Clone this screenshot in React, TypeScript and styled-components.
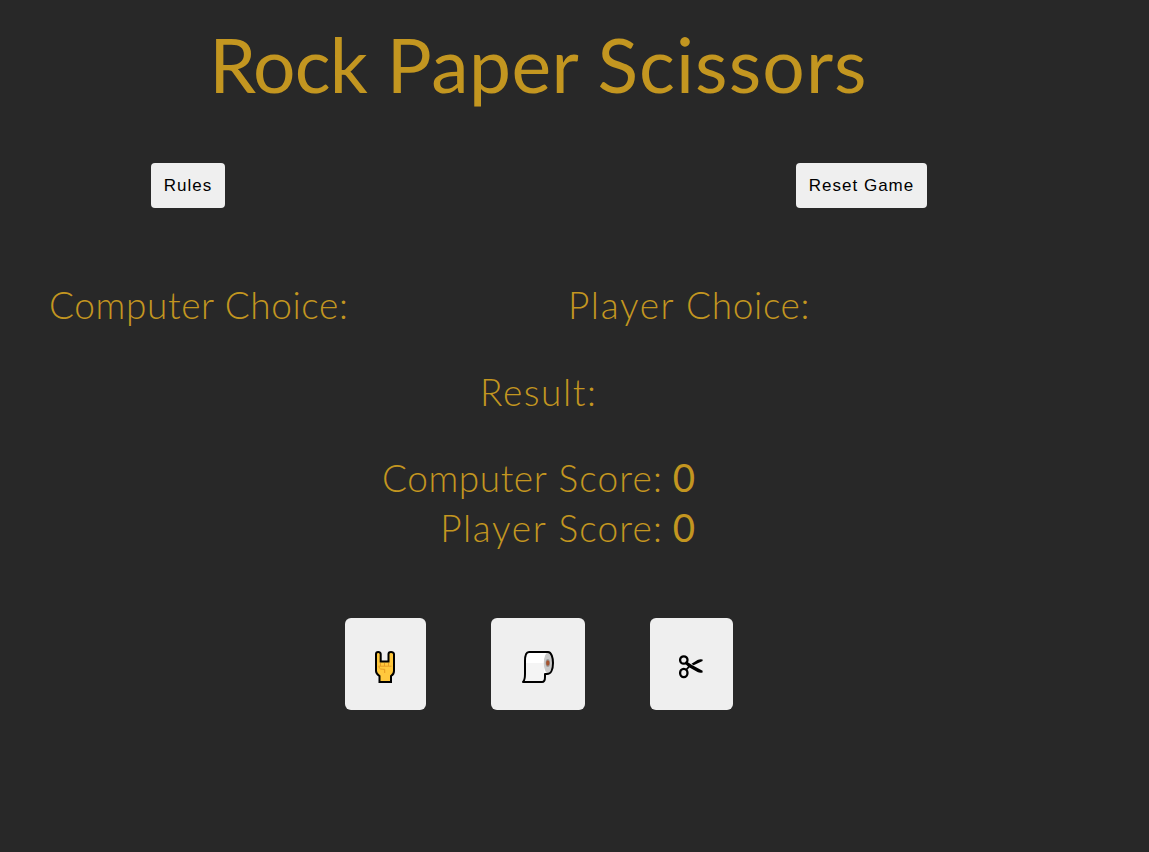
import React, { useState } from "react";
import styled, { createGlobalStyle } from "styled-components";

const GlobalStyle = createGlobalStyle`
  body { margin: 0; background: #282828; }
`;

const Page = styled.main`
  box-sizing: border-box;
  width: 1077px;
  height: 852px;
  padding-top: 14px;
  color: #c39620;
  font-family: Lato, "Liberation Sans", sans-serif;
`;

const Title = styled.h1`
  margin: 0;
  font-size: 75px;
  line-height: 100px;
  font-weight: 400;
  text-align: center;
  white-space: nowrap;
  letter-spacing: 0.5px;
`;

const Word = styled.span<{ $spacing: number }>`
  letter-spacing: ${(p) => p.$spacing}px;
`;

const Toolbar = styled.div`
  display: flex;
  justify-content: space-between;
  margin-top: 49px;
  padding: 0 150px 0 151px;
`;

const TextButton = styled.button<{ $width: number }>`
  width: ${(p) => p.$width}px;
  height: 45px;
  padding: 0;
  border: 0;
  border-radius: 4px;
  background: #efefef;
  color: #000;
  font: 17px "Liberation Sans", sans-serif;
  letter-spacing: 1px;
  white-space: nowrap;
`;

const Line = styled.p<{ $spacing: number }>`
  margin: 0;
  font-size: 37px;
  line-height: 50px;
  font-weight: 300;
  letter-spacing: ${(p) => p.$spacing}px;
  white-space: nowrap;
`;

const Choices = styled.section`
  display: grid;
  grid-template-columns: 519px auto;
  margin: 72px 0 0 49px;
`;

const Result = styled.section`
  margin: 37px 0 0 480px;
`;

const Scores = styled.section`
  display: flex;
  flex-direction: column;
  align-items: flex-end;
  width: 696px;
  margin-top: 35px;
`;

const ScoreRow = styled.div`
  display: flex;
  align-items: baseline;
  gap: 9px;
  height: 50px;
`;

const Score = styled.span`
  width: 24px;
  font-size: 38.5px;
  line-height: 50px;
  font-weight: 400;
  text-align: center;
`;

const Moves = styled.div`
  display: flex;
  gap: 65px;
  margin: 66px 0 0 345px;
`;

const MoveButton = styled.button<{ $width: number }>`
  display: flex;
  align-items: center;
  justify-content: center;
  width: ${(p) => p.$width}px;
  height: 92px;
  padding: 5px 1px 0 0;
  border: 0;
  border-radius: 6px;
  background: #efefef;
`;

const RockIcon = () => (
  <svg width="20" height="32" viewBox="0 0 20 32" aria-hidden="true">
    <path d="M1 3Q1 1 3.2 1T5.7 3V10.5H13.5V3Q13.5 1 16 1T19 3V20Q19 23.3 16 25V31H4.5V25Q1 22.5 1 20Z" fill="#ffc83d" stroke="#000" strokeWidth="2" />
    <path d="M5.5 12v3M9.5 12v3M13.5 12v3M3.5 15.2H16.5M4 15.5C4 18.2 6 18.3 9.7 18.3V22" fill="none" stroke="#e59b24" strokeWidth="1" />
  </svg>
);

const PaperIcon = () => (
  <svg width="32" height="32" viewBox="0 0 32 32" aria-hidden="true">
    <path d="M7 1H26C29.5 1 31 7 31 12C31 18 29 23 25 23H23V26C23 29 22 31 20 31H1C3 29 3 26 3 23V10C3 5 4 1 7 1Z" fill="#fff" />
    <path d="M4 12H22V27Q21.5 29.5 20 30H3Q4 28 4 24Z" fill="#f4f4f4" />
    <ellipse cx="26.2" cy="12" rx="4.4" ry="10.5" fill="#c9c9c9" />
    <ellipse cx="25.8" cy="12" rx="2.2" ry="4" fill="#9b9b9b" />
    <ellipse cx="25.8" cy="12" rx="1.7" ry="2.8" fill="#a5522d" />
    <path d="M7 1H26C29.5 1 31 7 31 12C31 18 29 23 25 23H23V26C23 29 22 31 20 31H1C3 29 3 26 3 23V10C3 5 4 1 7 1Z" fill="none" stroke="#000" strokeWidth="2" strokeLinejoin="round" />
  </svg>
);

const ScissorsIcon = () => (
  <svg width="24" height="24" viewBox="0 0 24 24" aria-hidden="true">
    <g fill="none" stroke="#000" strokeWidth="2.3">
      <ellipse cx="4.8" cy="5" rx="3.7" ry="3.7" />
      <ellipse cx="4.8" cy="18" rx="3.7" ry="4.1" />
    </g>
    <path d="M7 6L13 10L23.6 15.7V17.4Q21 18.4 18.5 17L10.5 12.6L7.3 15.8L6 14.7L9 11.4L5.8 8.4ZM12.5 8.8L18.5 5.1Q21 3.9 23.6 4.6V6L14.6 10.3Z" fill="#000" />
  </svg>
);

const moves = [
  { name: "Rock", width: 81, Icon: RockIcon },
  { name: "Paper", width: 94, Icon: PaperIcon },
  { name: "Scissors", width: 83, Icon: ScissorsIcon },
];

export default function App() {
  const [score] = useState({ computer: 0, player: 0 });
  return (
    <>
      <GlobalStyle />
      <Page>
        <Title>
          <Word $spacing={-0.8}>Rock</Word> Paper <Word $spacing={1.1}>Scissors</Word>
        </Title>
        <Toolbar>
          <TextButton $width={74}>Rules</TextButton>
          <TextButton $width={131}>Reset Game</TextButton>
        </Toolbar>
        <Choices>
          <Line $spacing={0.62}>Computer Choice:</Line>
          <Line $spacing={0.65}>
            <Word $spacing={1.65}>Player</Word> Choice:
          </Line>
        </Choices>
        <Result>
          <Line $spacing={1.6}>Result:</Line>
        </Result>
        <Scores>
          <ScoreRow>
            <Line $spacing={1.15}>
              <Word $spacing={0.55}>Computer</Word> Score:
            </Line>
            <Score>{score.computer}</Score>
          </ScoreRow>
          <ScoreRow>
            <Line $spacing={1.15}>
              <Word $spacing={1.6}>Player</Word> Score:
            </Line>
            <Score>{score.player}</Score>
          </ScoreRow>
        </Scores>
        <Moves>
          {moves.map(({ name, width, Icon }) => (
            <MoveButton key={name} $width={width} aria-label={name}>
              <Icon />
            </MoveButton>
          ))}
        </Moves>
      </Page>
    </>
  );
}
